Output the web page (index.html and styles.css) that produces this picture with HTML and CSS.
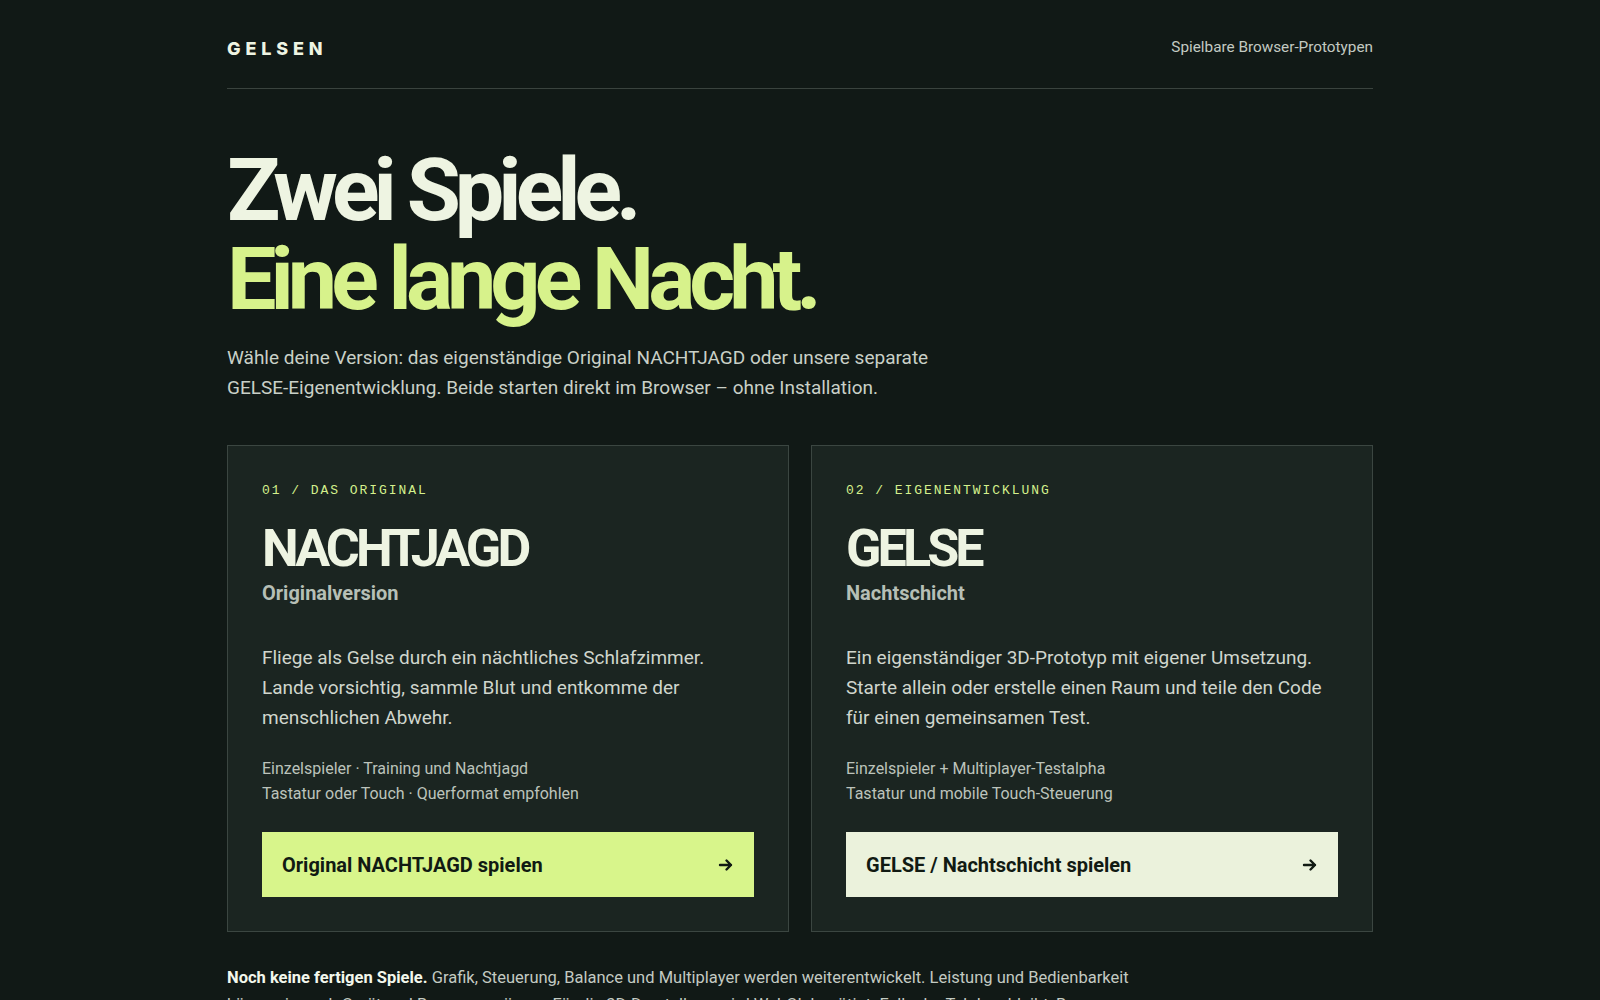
FILE: index.html
```html
<!DOCTYPE html>
<html lang="de">
<head>
  <meta charset="UTF-8">
  <meta name="viewport" content="width=device-width, initial-scale=1.0">
  <title>GELSEN – Spielbare Browser-Prototypen</title>
  <link rel="stylesheet" href="styles.css">
</head>
<body>
  <div class="page">
    <header class="site-header">
      <div class="brand">GELSEN</div>
      <div class="tagline">Spielbare Browser-Prototypen</div>
    </header>

    <section class="hero">
      <h1>
        <span class="hero-line">Zwei Spiele.</span>
        <span class="hero-line accent">Eine lange Nacht.</span>
      </h1>
      <p class="intro">Wähle deine Version: das eigenständige Original NACHTJAGD oder unsere separate GELSE-Eigenentwicklung. Beide starten direkt im Browser – ohne Installation.</p>
    </section>

    <!-- Game cards -->
    <section class="games">
      <article class="game-card">
        <div class="game-label">01 / DAS ORIGINAL</div>
        <h2 class="game-title">NACHTJAGD</h2>
        <div class="game-sub">Originalversion</div>
        <p class="game-desc">Fliege als Gelse durch ein nächtliches Schlafzimmer. Lande vorsichtig, sammle Blut und entkomme der menschlichen Abwehr.</p>
        <p class="game-meta">Einzelspieler · Training und Nachtjagd<br>Tastatur oder Touch · Querformat empfohlen</p>
        <a class="play-button lime" href="#">
          <span>Original NACHTJAGD spielen</span>
          <svg class="arrow" viewBox="0 0 16 16" width="16" height="16" aria-hidden="true">
            <path d="M2 8h11M8.5 3.5 13 8l-4.5 4.5" fill="none" stroke="currentColor" stroke-width="2.4" stroke-linecap="round" stroke-linejoin="round"/>
          </svg>
        </a>
      </article>

      <article class="game-card">
        <div class="game-label">02 / EIGENENTWICKLUNG</div>
        <h2 class="game-title">GELSE</h2>
        <div class="game-sub">Nachtschicht</div>
        <p class="game-desc">Ein eigenständiger 3D-Prototyp mit eigener Umsetzung. Starte allein oder erstelle einen Raum und teile den Code für einen gemeinsamen Test.</p>
        <p class="game-meta">Einzelspieler + Multiplayer-Testalpha<br>Tastatur und mobile Touch-Steuerung</p>
        <a class="play-button cream" href="#">
          <span>GELSE / Nachtschicht spielen</span>
          <svg class="arrow" viewBox="0 0 16 16" width="16" height="16" aria-hidden="true">
            <path d="M2 8h11M8.5 3.5 13 8l-4.5 4.5" fill="none" stroke="currentColor" stroke-width="2.4" stroke-linecap="round" stroke-linejoin="round"/>
          </svg>
        </a>
      </article>
    </section>

    <p class="notice"><strong>Noch keine fertigen Spiele.</strong> Grafik, Steuerung, Balance und Multiplayer werden weiterentwickelt. Leistung und Bedienbarkeit können je nach Gerät und Browser variieren. Für die 3D-Darstellung wird WebGL benötigt. Falls der Tab leer bleibt, Browser neu laden oder ein Problem melden.</p>
  </div>
</body>
</html>
```

FILE: styles.css
```css
* {
  margin: 0;
  padding: 0;
  box-sizing: border-box;
}
body {
  font-family: Roboto, "Noto Sans", sans-serif;
  background: #111916;
  color: #eef4e2;
  overflow: hidden;
}
.page {
  max-width: 1146px;
  margin: 0 auto;
}

/* Header */
.site-header {
  display: flex;
  justify-content: space-between;
  align-items: center;
  padding: 38px 0 28px;
  border-bottom: 1px solid #3a433e;
}
.brand {
  font-family: Inter, sans-serif;
  font-size: 18px;
  font-weight: 800;
  letter-spacing: 0.27em;
  line-height: 22px;
  color: #eef4e2;
}
.tagline {
  font-size: 15.3px;
  color: #c3cac2;
  margin-top: -5px;
}

/* Hero */
.hero {
  padding-top: 56px;
}
.hero h1 {
  font-size: 88px;
  font-weight: 700;
  line-height: 89px;
  letter-spacing: -0.068em;
}
.hero-line {
  display: block;
  color: #eef4e2;
}
.hero-line.accent {
  color: #d7f28b;
}
.intro {
  max-width: 720px;
  margin-top: 20px;
  font-size: 19px;
  line-height: 30px;
  color: #c9d0c7;
}

/* Cards */
.games {
  display: grid;
  grid-template-columns: 1fr 1fr;
  gap: 22px;
  margin-top: 42px;
}
.game-card {
  background: #1b2521;
  border: 1px solid #3b4641;
  padding: 36px 34px 34px;
}
.game-label {
  font-family: "Liberation Mono", monospace;
  font-size: 13px;
  line-height: 18px;
  letter-spacing: 0.15em;
  color: #d4f08c;
}
.game-title {
  margin-top: 21px;
  font-size: 52px;
  font-weight: 700;
  line-height: 56px;
  letter-spacing: -0.075em;
  color: #eef4e2;
}
.game-sub {
  margin-top: 3px;
  font-size: 20px;
  font-weight: 700;
  line-height: 26px;
  color: #b6bfb6;
}
.game-desc {
  margin-top: 37px;
  font-size: 19px;
  line-height: 30px;
  color: #d0d6cd;
}
.game-meta {
  margin-top: 24px;
  font-size: 16px;
  line-height: 24.5px;
  color: #bcc3bb;
}
.play-button {
  display: flex;
  justify-content: space-between;
  align-items: center;
  height: 65px;
  margin-top: 26px;
  padding: 0 20px;
  font-size: 20px;
  font-weight: 700;
  color: #111a13;
  text-decoration: none;
}
.play-button.lime {
  background: #d8f58b;
}
.play-button.cream {
  background: #ebf2dc;
}
.arrow {
  flex-shrink: 0;
}

/* Bottom notice */
.notice {
  max-width: 920px;
  margin-top: 32px;
  font-size: 16.5px;
  line-height: 27px;
  color: #c3cac2;
}
.notice strong {
  color: #f3f7ec;
  font-weight: 700;
}
```
